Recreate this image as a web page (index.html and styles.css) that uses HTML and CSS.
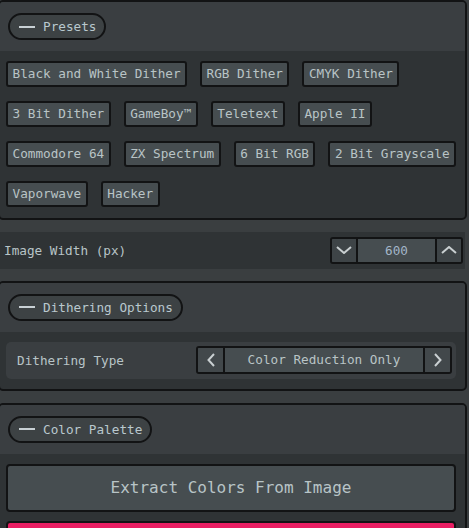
FILE: index.html
```html
<!DOCTYPE html>
<html lang="en">
<head>
<meta charset="utf-8">
<title>Dither Settings</title>
<link rel="stylesheet" href="styles.css">
</head>
<body>
<div class="page">
  <section class="panel">
    <header class="panel-head">
      <button class="pill"><span class="dash"></span>Presets</button>
    </header>
    <div class="panel-body presets">
      <button class="btn">Black and White Dither</button>
      <button class="btn">RGB Dither</button>
      <button class="btn">CMYK Dither</button>
      <button class="btn">3 Bit Dither</button>
      <button class="btn">GameBoy™</button>
      <button class="btn">Teletext</button>
      <button class="btn">Apple II</button>
      <button class="btn">Commodore 64</button>
      <button class="btn">ZX Spectrum</button>
      <button class="btn">6 Bit RGB</button>
      <button class="btn">2 Bit Grayscale</button>
      <button class="btn">Vaporwave</button>
      <button class="btn">Hacker</button>
    </div>
  </section>

  <div class="field-row">
    <span class="label">Image Width (px)</span>
    <div class="stepper">
      <button class="step"><svg width="16" height="8" viewBox="0 0 16 8"><polyline points="1,1 8,7 15,1" /></svg></button>
      <span class="step-value">600</span>
      <button class="step"><svg width="16" height="8" viewBox="0 0 16 8"><polyline points="1,7 8,1 15,7" /></svg></button>
    </div>
  </div>

  <section class="panel">
    <header class="panel-head">
      <button class="pill"><span class="dash"></span>Dithering Options</button>
    </header>
    <div class="panel-body padded">
      <div class="opt-row">
        <span class="label">Dithering Type</span>
        <div class="select">
          <button class="sel-btn"><svg width="8" height="14" viewBox="0 0 8 14"><polyline points="7,1 1.5,7 7,13" /></svg></button>
          <span class="sel-value">Color Reduction Only</span>
          <button class="sel-btn"><svg width="8" height="14" viewBox="0 0 8 14"><polyline points="1,1 6.5,7 1,13" /></svg></button>
        </div>
      </div>
    </div>
  </section>

  <section class="panel">
    <header class="panel-head">
      <button class="pill"><span class="dash"></span>Color Palette</button>
    </header>
    <div class="panel-body padded palette">
      <button class="extract">Extract Colors From Image</button>
      <button class="swatch"></button>
    </div>
  </section>
</div>
</body>
</html>
```

FILE: styles.css
```css
html, body {
  margin: 0;
  padding: 0;
}

body {
  background: #3a3e40;
  font-family: "DejaVu Sans Mono", monospace;
  font-size: 12.7px;
  color: #b8c4c7;
  overflow: hidden;
}

.page {
  display: flex;
  flex-direction: column;
  gap: 12px;
}

.panel {
  margin: 0 2px 0 -2px;
  border: 2px solid #121314;
  border-radius: 5px;
  background: #2f3335;
  overflow: hidden;
}

.panel-head {
  box-sizing: border-box;
  height: 49px;
  padding: 11px 8px 0;
  background: #3a3e41;
  display: flex;
  align-items: flex-start;
}

.pill {
  box-sizing: border-box;
  height: 27px;
  border: 2px solid #121314;
  border-radius: 14px;
  background: #3d4244;
  display: flex;
  align-items: center;
  gap: 8px;
  padding: 0 8px 0 9px;
  font: inherit;
  color: #b9c8ce;
}

.dash {
  width: 16px;
  height: 2px;
  background: #c8d0d4;
}

.presets {
  display: flex;
  flex-wrap: wrap;
  gap: 14px 13px;
  padding: 10px 6px 10.5px;
}

.btn {
  box-sizing: border-box;
  height: 26px;
  border: 2px solid #121314;
  border-radius: 3px;
  background: #464d50;
  color: #b9c4c6;
  font: inherit;
  line-height: 22px;
  padding: 0 4.5px;
  margin: 0;
}

.field-row {
  box-sizing: border-box;
  height: 37px;
  margin-right: 4px;
  background: #2f3335;
  display: flex;
  align-items: center;
  justify-content: space-between;
  padding: 0 2px 0 4px;
}

.stepper {
  box-sizing: border-box;
  height: 27px;
  display: flex;
  border: 2px solid #121314;
  border-radius: 3px;
  overflow: hidden;
}

.step {
  width: 24px;
  padding: 0;
  margin: 0;
  border: 0;
  background: #3e4447;
  display: flex;
  align-items: center;
  justify-content: center;
}

.step svg polyline,
.sel-btn svg polyline {
  fill: none;
  stroke: #c9cfd1;
  stroke-width: 2;
}

.step-value {
  width: 77px;
  border-left: 2px solid #121314;
  border-right: 2px solid #121314;
  background: #464d50;
  text-align: center;
  line-height: 23px;
  color: #a3b6c9;
}

.padded {
  padding: 10px 9px 10px 6px;
}

.opt-row {
  box-sizing: border-box;
  height: 37px;
  background: #3a3e41;
  border-radius: 5px;
  display: flex;
  align-items: center;
  justify-content: space-between;
  padding: 0 4px 0 11px;
}

.select {
  box-sizing: border-box;
  width: 256px;
  height: 28px;
  display: flex;
  border: 2px solid #121314;
  border-radius: 3px;
  overflow: hidden;
}

.sel-btn {
  width: 25px;
  padding: 0;
  margin: 0;
  border: 0;
  background: #42484b;
  display: flex;
  align-items: center;
  justify-content: center;
}

.sel-value {
  flex: 1;
  border-left: 2px solid #121314;
  border-right: 2px solid #121314;
  background: #464d50;
  text-align: center;
  line-height: 24px;
  color: #b9c4c6;
}

.palette {
  display: flex;
  flex-direction: column;
  gap: 9.5px;
}

.extract {
  box-sizing: border-box;
  height: 48px;
  width: 100%;
  margin: 0;
  border: 2px solid #121314;
  border-radius: 4px;
  background: #464d50;
  color: #b8c4c7;
  font-family: inherit;
  font-size: 16px;
}

.swatch {
  box-sizing: border-box;
  height: 48px;
  width: 100%;
  margin: 0;
  border: 2px solid #121314;
  border-radius: 4px;
  background: #e91e63;
}
```
